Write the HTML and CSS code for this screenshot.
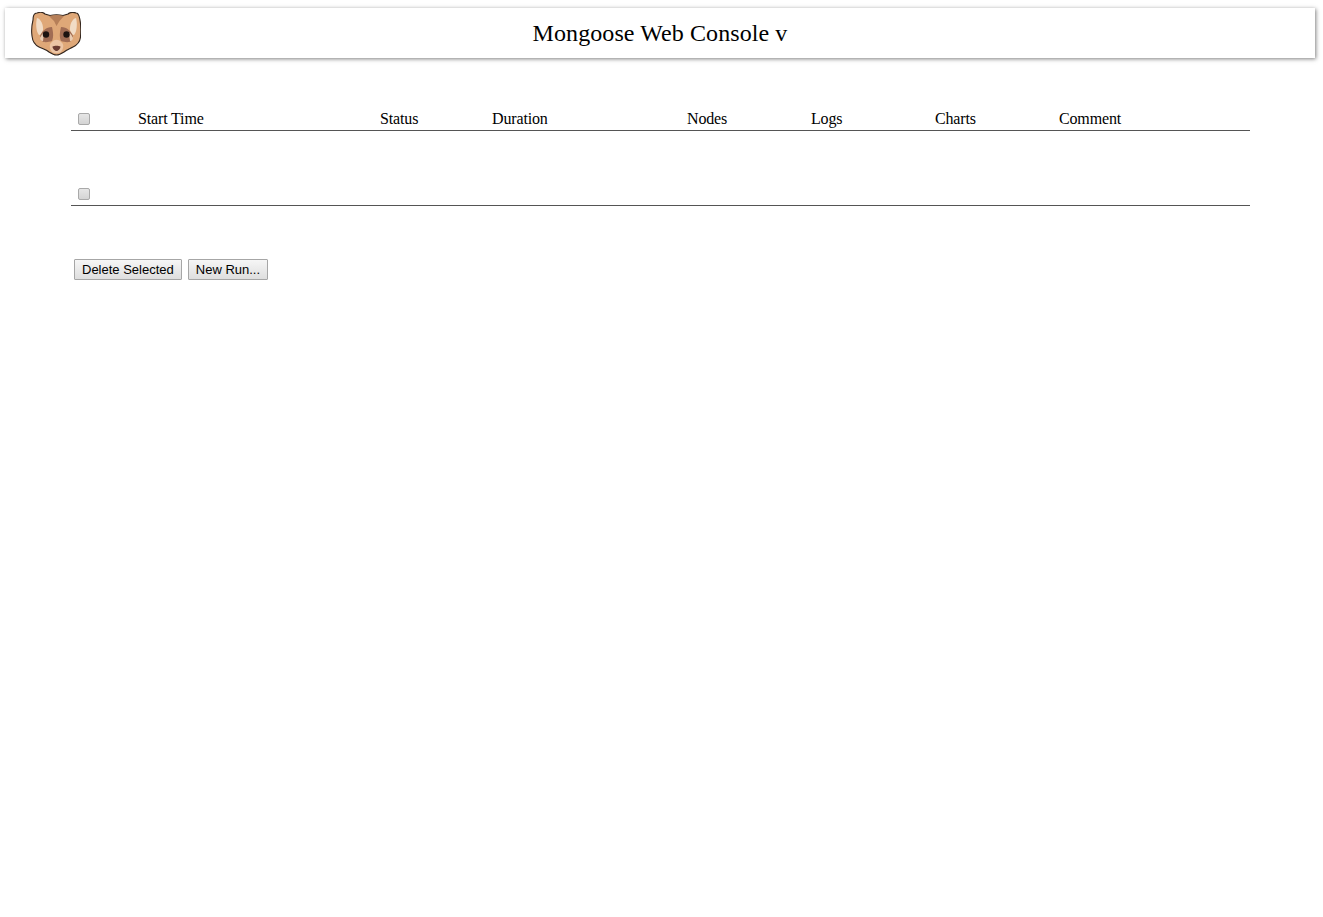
FILE: index.html
```html
<!DOCTYPE html>
<html lang="en">
<head>
<meta charset="utf-8">
<title>Mongoose Web Console</title>
<link rel="stylesheet" href="styles.css">
</head>
<body>
<header class="topbar">
  <svg class="logo" viewBox="0 0 50 44" width="50" height="44" aria-hidden="true">
    <path d="M1 24C0 17 1 12 2 8C2 4 3 1 6 1C9 0 12 0 14 2L19 3.500C23 2.500 28 2.500 32 3.500L37 2C39 0 43 0 45 1C48 1 48 4 49 8C50 13 50 18 49.500 25C49 30 46 33 42 35C38 37 35 38 33 40C30 42 27 43 25.500 43C23 43 21 42 18 40C16 38 12 37 8 35C4 33 1.500 29 1 24Z" fill="#dfa878" stroke="#33261e" stroke-width="1.1"/>
    <path d="M18 4C22 3 29 3 33 4L28.500 9L25.500 14L23 9Z" fill="#b67f58"/>
    <path d="M6 6C10 7 12.500 13 12 18C11.500 21 9.500 23 8 23C5 20 4.500 11 6 6Z" fill="#f1dcc6"/>
    <path d="M45 6C41 7 38.500 13 39 18C39.500 21 41.500 23 43 23C46 20 46.500 11 45 6Z" fill="#f1dcc6"/>
    <path d="M9 24C11 19 15 15 21 15C22 20 23 24 21 29C18 30 13 31 11 29Z" fill="#a06c54"/>
    <path d="M42 24C40 19 36 15 30 15C29 20 28 24 30 29C33 30 38 31 40 29Z" fill="#a06c54"/>
    <path d="M9 26C11 22 12 21 13 21L12 29C10.500 29.500 9.500 28 9 26Z" fill="#e8cbb2"/>
    <path d="M42 26C40 22 39 21 38 21L39 29C40.500 29.500 41.500 28 42 26Z" fill="#e8cbb2"/>
    <circle cx="15" cy="22.500" r="3.200" fill="#1b1210"/>
    <circle cx="35.500" cy="22.500" r="3.200" fill="#1b1210"/>
    <path d="M21 30C23 27 28 27 30 30C33 32 33 36 30 40C28 41.500 23 41.500 21 40C18 36 18 32 21 30Z" fill="#ecc6a6"/>
    <path d="M21.500 34.500C23.500 33.500 27.500 33.500 29.500 34.500C29.500 36.500 27.500 39 25.500 39C23.500 39 21.500 36.500 21.500 34.500Z" fill="#6b3d33"/>
  </svg>
  <h1 class="title">Mongoose Web Console v</h1>
</header>

<main class="content">
  <table class="runs">
    <colgroup>
      <col class="c-check"><col class="c-start"><col class="c-status"><col class="c-duration">
      <col class="c-nodes"><col class="c-logs"><col class="c-charts"><col class="c-comment">
    </colgroup>
    <thead>
      <tr>
        <th><input type="checkbox" class="check" aria-label="Select all"></th>
        <th>Start Time</th><th>Status</th><th>Duration</th><th>Nodes</th><th>Logs</th><th>Charts</th><th>Comment</th>
      </tr>
    </thead>
    <tfoot>
      <tr>
        <td><input type="checkbox" class="check" aria-label="Select all"></td>
        <td></td><td></td><td></td><td></td><td></td><td></td><td></td>
      </tr>
    </tfoot>
  </table>
  <div class="actions">
    <button type="button" class="btn">Delete Selected</button>
    <button type="button" class="btn">New Run...</button>
  </div>
</main>
</body>
</html>
```
FILE: styles.css
```css
body {
  margin: 0;
  padding: 8px 8px 0 5px;
  font-family: "Liberation Serif", "Times New Roman", serif;
  font-size: 16px;
  color: #000;
}
.topbar {
  position: relative;
  height: 50px;
  display: flex;
  align-items: center;
  justify-content: center;
  background: #fff;
  box-shadow: 1px 1px 4px 0 rgba(0, 0, 0, 0.5);
}
.logo {
  position: absolute;
  left: 26px;
  top: 4px;
  filter: blur(0.3px);
}
.title {
  margin: 0;
  font-size: 24px;
  font-weight: 400;
  line-height: 50px;
  letter-spacing: 0.09px;
}
.content {
  padding: 44px 65px 0 66px;
}
.runs {
  width: 1179px;
  table-layout: fixed;
  border-collapse: collapse;
}
.c-check { width: 62px; }
.c-start { width: 242px; }
.c-status { width: 112px; }
.c-duration { width: 195px; }
.c-nodes, .c-logs, .c-charts { width: 124px; }
.c-comment { width: 196px; }
.runs th, .runs td {
  padding: 0 0 2px 5px;
  height: 26px;
  vertical-align: bottom;
  text-align: left;
  font-weight: 400;
  line-height: 18px;
  letter-spacing: -0.15px;
  border-bottom: 1px solid #555;
}
.runs tfoot td {
  height: 72px;
}
.check {
  appearance: none;
  display: block;
  box-sizing: border-box;
  width: 12px;
  height: 12px;
  margin: 0 0 3px 2px;
  border: 1px solid #a9a9a9;
  border-radius: 2px;
  background: linear-gradient(#e6e6e6, #d4d4d4);
}
.actions {
  display: flex;
  gap: 6px;
  padding: 53px 0 0 3px;
}
.btn {
  box-sizing: border-box;
  height: 21px;
  padding: 0 7px;
  border: 1px solid #a6a6a6;
  border-radius: 1px;
  background: linear-gradient(#f6f6f6, #dedede);
  font-family: "Liberation Sans", Arial, sans-serif;
  font-size: 13px;
  color: #000;
}
```
